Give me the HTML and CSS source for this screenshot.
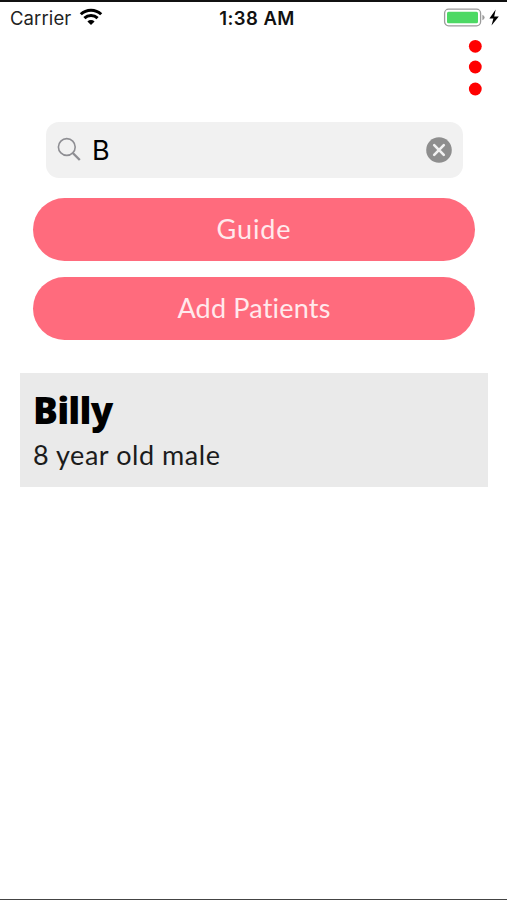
FILE: index.html
```
<!DOCTYPE html>
<html lang="en">
<head>
    <meta charset="UTF-8">
    <meta name="viewport" content="width=device-width, initial-scale=1.0">
    <title>Patients</title>
    <link rel="stylesheet" href="styles.css">
</head>
<body>
    <div class="screen">
        <div class="status-bar">
            <div class="carrier">
                <span class="carrier-name">Carrier</span>
                <svg class="wifi" width="24" height="18" viewBox="0 0 24 18">
                    <path d="M1.8 6.3a14.6 14.6 0 0 1 20.4 0M5.4 10.1a9.5 9.5 0 0 1 13.2 0" fill="none" stroke="#000" stroke-width="3"/>
                    <path d="M12 17L8.4 13.4a5.2 5.2 0 0 1 7.2 0z" fill="#000"/>
                </svg>
            </div>
            <span class="time">1:38 AM</span>
            <div class="power">
                <svg width="56" height="20" viewBox="0 0 56 20">
                    <rect x="1.6" y="1.2" width="36" height="16.6" rx="4" fill="#fff" stroke="#9b9b9b" stroke-width="1.3"/>
                    <rect x="4" y="3.8" width="31" height="11.4" rx="1.5" fill="#4cd964"/>
                    <path d="M39.4 6.8q2.2 1 2.2 2.7t-2.2 2.7z" fill="#9b9b9b"/>
                    <path d="M52.7 1.6L46.4 10.5h4L48.5 17.6 55.8 8.5h-4.6z" fill="#000"/>
                </svg>
            </div>
        </div>

        <div class="menu">
            <svg width="14" height="58" viewBox="0 0 14 58" fill="#ff0000">
                <circle cx="7.3" cy="7.3" r="6.4"/>
                <circle cx="7.3" cy="28" r="6.4"/>
                <circle cx="7.3" cy="50" r="6.4"/>
            </svg>
        </div>

        <div class="search">
            <svg width="26" height="26" viewBox="0 0 26 26" fill="none" stroke="#8e8e93">
                <circle cx="9.8" cy="10" r="8.4" stroke-width="1.6"/>
                <path d="M15.8 16L22.8 23" stroke-width="2.4"/>
            </svg>
            <span class="search-text">B</span>
            <svg class="clear" width="26" height="26" viewBox="0 0 26 26">
                <circle cx="13" cy="13" r="12.8" fill="#8e8e8e"/>
                <path d="M8.2 8.2l9.6 9.6M17.8 8.2l-9.6 9.6" stroke="#f1f1f1" stroke-width="2.6" stroke-linecap="round"/>
            </svg>
        </div>

        <div class="buttons">
            <div class="button guide">Guide</div>
            <div class="button add">Add Patients</div>
        </div>

        <div class="patient">
            <div class="patient-name">Billy</div>
            <div class="patient-info">8 year old male</div>
        </div>
    </div>
</body>
</html>
```
FILE: styles.css
```
body {
    margin: 0;
    background-color: #fff;
    font-family: Lato, sans-serif;
    color: #000;
}

.screen {
    box-sizing: border-box;
    height: 900px;
    overflow: hidden;
    border-top: 2px solid #111;
    border-bottom: 1px solid #444;
}

.status-bar {
    display: grid;
    grid-template-columns: 1fr auto 1fr;
    align-items: center;
    height: 32px;
    padding: 0 8px 0 10px;
    font-family: Inter, sans-serif;
    font-size: 18.5px;
}

.carrier {
    display: flex;
    align-items: center;
    gap: 8px;
}

.carrier-name {
    letter-spacing: 0.1px;
    color: #222;
}

.wifi {
    margin-top: -2px;
}

.time {
    margin-left: 5px;
    font-weight: 600;
    letter-spacing: 0.45px;
    color: #111;
}

.power {
    display: flex;
    justify-content: flex-end;
}

.menu {
    display: flex;
    justify-content: flex-end;
    height: 58px;
    padding: 5px 25px 0 0;
}

.search {
    display: flex;
    align-items: center;
    box-sizing: border-box;
    height: 56px;
    margin: 25px 44px 0 46px;
    padding: 0 11px;
    border-radius: 13px;
    background-color: #f1f1f1;
}

.search-text {
    margin-left: 9px;
    font-family: Inter, sans-serif;
    font-size: 27px;
}

.clear {
    margin-left: auto;
}

.buttons {
    display: flex;
    flex-direction: column;
    gap: 16px;
    margin: 20px 32px 0 33px;
}

.button {
    height: 63px;
    border-radius: 32px;
    background-color: #ff6b7d;
    color: #ffe9ec;
    font-size: 27px;
    line-height: 62px;
    text-align: center;
}

.guide {
    letter-spacing: 0.9px;
}

.add {
    letter-spacing: 0.2px;
}

.patient {
    box-sizing: border-box;
    height: 114px;
    margin: 33px 19px 0 20px;
    padding: 15px 13px 0;
    background-color: #eaeaea;
}

.patient-name {
    font-family: "Open Sans", sans-serif;
    font-size: 37px;
    font-weight: 800;
    line-height: 44px;
    letter-spacing: -0.8px;
}

.patient-info {
    margin-top: 6px;
    font-size: 27px;
    line-height: 34px;
    letter-spacing: 0.55px;
    color: #1c1c1c;
}
```
